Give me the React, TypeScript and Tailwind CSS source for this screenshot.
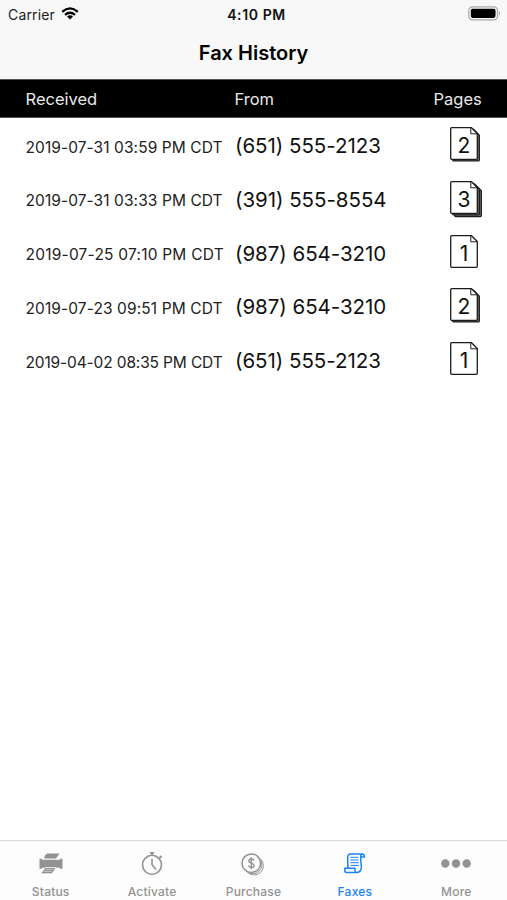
import React from "react";

type Fax = { received: string; from: string; pages: number; tracking: string };

const faxes: Fax[] = [
  { received: "2019-07-31 03:59 PM CDT", from: "(651) 555-2123", pages: 2, tracking: "tracking-[0.08px]" },
  { received: "2019-07-31 03:33 PM CDT", from: "(391) 555-8554", pages: 3, tracking: "tracking-[0.08px]" },
  { received: "2019-07-25 07:10 PM CDT", from: "(987) 654-3210", pages: 1, tracking: "tracking-[0.22px]" },
  { received: "2019-07-23 09:51 PM CDT", from: "(987) 654-3210", pages: 2, tracking: "tracking-[0.1px]" },
  { received: "2019-04-02 08:35 PM CDT", from: "(651) 555-2123", pages: 1, tracking: "tracking-[-0.14px]" },
];

const sheet = "M1.700 .7H21.5L27.3 6.5V31.300Q27.300 32.300 26.300 32.300H1.700Q.7 32.300 .7 31.300V1.700Q.7 .7 1.700 .7Z";

function PagesIcon({ count }: { count: number }) {
  return (
    <div className="relative h-[37px] w-[34px]">
      <svg className="absolute inset-0" width="34" height="37" viewBox="0 0 34 37" fill="none" stroke="#1c1c1c" strokeWidth="1.3" strokeLinejoin="round">
        {count > 2 && <path d={sheet} transform="translate(4 3.3)" fill="#777" />}
        {count > 1 && <path d={sheet} transform="translate(2 1.6)" fill="#777" />}
        <path d={sheet} fill="#fff" />
        <path d="M20.8 .9V6.8H27.2" strokeWidth="1" />
      </svg>
      <span className="absolute top-[6px] left-0 w-[28px] text-center text-[21px] leading-[26px]">{count}</span>
    </div>
  );
}

function PrinterIcon() {
  return (
    <svg width="26" height="26" viewBox="0 0 26 26" fill="#929292">
      <path d="M9.600 2.500H21.500L18 7.500H6.200C6.400 4.900 7.500 3 9.600 2.500Z" />
      <path d="M1.500 7.700H4V8.700H22V7.700H24.500V17.800H22V16.800H4V17.800H1.500Z" />
      <path d="M7.400 16.500H18.200L13.900 22.800H2.600Z" stroke="#fdfdfd" strokeWidth=".8" />
      <path d="M7.700 18.500H15.200M6.300 20.500H13.600" stroke="#ddd" strokeWidth=".7" />
    </svg>
  );
}

function StopwatchIcon() {
  return (
    <svg width="26" height="26" viewBox="0 0 26 26" fill="none" stroke="#929292" strokeWidth="1.6">
      <circle cx="13" cy="13.800" r="9.500" />
      <path d="M10.900 1.900H15.100M13 2V5M20.400 7.300L22 5.700M20.900 4.800L22.700 6.500M13 7.800V13.800L17 18.500" />
    </svg>
  );
}

function CoinsIcon() {
  return (
    <svg width="26" height="26" viewBox="0 0 26 26" fill="#fdfdfd" stroke="#929292">
      <circle cx="14.200" cy="14.800" r="9.200" strokeWidth="1" />
      <circle cx="12.700" cy="13.600" r="9.200" strokeWidth="1" />
      <circle cx="11.300" cy="12.200" r="9.300" strokeWidth="1.500" />
      <path fill="none" d="M14 9.500C13.600 8.400 12.600 8 11.300 8C9.800 8 8.800 8.700 8.800 9.900C8.800 12.700 14.100 11.400 14.100 14.300C14.100 15.600 13 16.400 11.400 16.400C9.900 16.400 8.800 15.700 8.500 14.400M11.300 6.200V18.200" strokeWidth="1.400" />
    </svg>
  );
}

function ScrollIcon() {
  return (
    <svg width="26" height="26" viewBox="0 0 26 26" fill="none" stroke="#1a82f2" strokeWidth="1.500" strokeLinejoin="round">
      <path d="M5.700 17C6.500 12.500 4.700 7 6.300 4.200Q7 3.100 8.500 3.100H20.300" />
      <path d="M20.300 3.100Q22.500 3.300 22.500 6H18.700Q18.500 3.600 20.300 3.100M18.700 6C18.300 11 20.300 15 19 18.500Q17.900 21.400 14.900 21.400H4.500Q2.800 21.400 2.800 19.500V17.300H12.900V19.500Q13.200 21.400 14.900 21.400" />
      <path d="M8.300 6.300H16.400M8.300 9H16.600M8.500 11.700H16.800M8.700 14.400H17" strokeWidth="1" />
    </svg>
  );
}

function MoreIcon() {
  return (
    <svg width="32" height="26" viewBox="0 0 32 26" fill="#929292">
      <circle cx="5.300" cy="12.500" r="4.200" />
      <circle cx="16" cy="12.500" r="4.200" />
      <circle cx="26.700" cy="12.500" r="4.200" />
    </svg>
  );
}

const tabs = [
  { label: "Status", icon: <PrinterIcon /> },
  { label: "Activate", icon: <StopwatchIcon /> },
  { label: "Purchase", icon: <CoinsIcon /> },
  { label: "Faxes", icon: <ScrollIcon />, active: true },
  { label: "More", icon: <MoreIcon /> },
];

export default function App() {
  return (
    <div className="flex h-[900px] w-[507px] flex-col overflow-hidden bg-white font-['Inter',sans-serif] text-[#111]">
      <header className="h-[79px] shrink-0 bg-[#f8f8f8]">
        <div className="grid h-[28px] grid-cols-3 items-center pr-[6px] pl-[8px]">
          <div className="flex items-center gap-[6px] text-[14px] tracking-[0.15px] text-[#222]">
            <span>Carrier</span>
            <svg className="mb-[2px]" width="18" height="13" viewBox="0 0 18 13" fill="none" stroke="#000" strokeWidth="2.300">
              <path d="M1.200 4.800Q9-2 16.800 4.800M4 7.800Q9 3.600 14 7.800" />
              <path d="M6 9.500Q9 7.200 12 9.500L9 12.500Z" fill="#000" stroke="none" />
            </svg>
          </div>
          <span className="pl-[4px] text-center text-[14px] font-semibold tracking-[0.6px]">4:10 PM</span>
          <svg className="mb-[2px] justify-self-end" width="33" height="15" viewBox="0 0 33 15">
            <rect x=".8" y=".8" width="28.700" height="13" rx="3.600" fill="#f8f8f8" stroke="#aaa" strokeWidth="1.200" />
            <rect x="2.800" y="2.700" width="24.700" height="9.200" rx="1.800" />
            <path d="M31 5Q33 7.300 31 9.600Z" fill="#999" />
          </svg>
        </div>
        <h1 className="text-center text-[20px] leading-[50px] font-semibold text-black">Fax History</h1>
      </header>
      <div className="flex h-[39px] shrink-0 items-center border-y border-[#555] bg-black pt-px pl-[25.500px] text-[16.500px] text-[#e8e8e8]">
        <span className="w-[209px]">Received</span>
        <span className="w-[199px]">From</span>
        <span>Pages</span>
      </div>
      <main className="flex-1">
        {faxes.map((fax) => (
          <div key={fax.received} className="flex h-[53.800px] items-start pl-[25.500px]">
            <span className={`w-[209.500px] pt-[17.500px] text-[15.500px] leading-[24px] whitespace-nowrap text-[#222] ${fax.tracking}`}>{fax.received}</span>
            <span className="w-[215px] pt-[13px] text-[20.500px] leading-[30px] tracking-[-0.04px] whitespace-nowrap">{fax.from}</span>
            <div className="pt-[9px]"><PagesIcon count={fax.pages} /></div>
          </div>
        ))}
      </main>
      <nav className="grid h-[60px] shrink-0 grid-cols-5 border-t border-[#dcdcdc] bg-[#fdfdfd]">
        {tabs.map((tab) => (
          <div key={tab.label} className={`flex flex-col items-center pt-[10px] text-[12px] font-medium tracking-[0.2px] ${tab.active ? "text-[#1a82f2]" : "text-[#929292]"}`}>
            {tab.icon}
            <span className="mt-[7px] leading-[16px]">{tab.label}</span>
          </div>
        ))}
      </nav>
    </div>
  );
}
